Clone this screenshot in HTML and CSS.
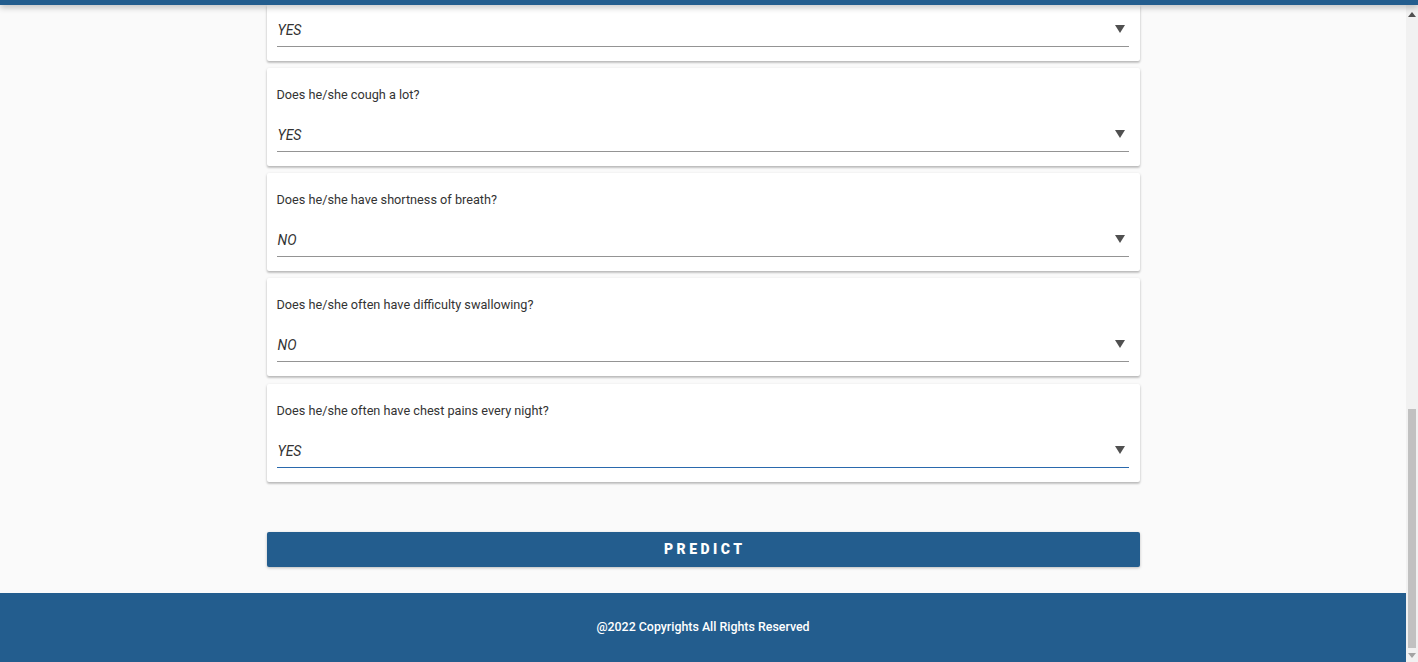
FILE: index.html
```html
<!DOCTYPE html>
<html lang="en">
<head>
<meta charset="utf-8">
<title>Prediction Form</title>
<link rel="stylesheet" href="styles.css">
</head>
<body>
<header class="topbar"></header>
<div class="frame">
  <main class="main">
    <div class="form-list">
      <section class="card card-continued">
        <div class="select"><span class="select-value">YES</span><svg class="caret" width="10" height="8" viewBox="0 0 10 8"><polygon points="0,0 10,0 5,8" fill="#505050"/></svg></div>
      </section>
      <section class="card">
        <label class="q-label">Does he/she cough a lot?</label>
        <div class="select"><span class="select-value">YES</span><svg class="caret" width="10" height="8" viewBox="0 0 10 8"><polygon points="0,0 10,0 5,8" fill="#505050"/></svg></div>
      </section>
      <section class="card">
        <label class="q-label">Does he/she have shortness of breath?</label>
        <div class="select"><span class="select-value">NO</span><svg class="caret" width="10" height="8" viewBox="0 0 10 8"><polygon points="0,0 10,0 5,8" fill="#505050"/></svg></div>
      </section>
      <section class="card">
        <label class="q-label">Does he/she often have difficulty swallowing?</label>
        <div class="select"><span class="select-value">NO</span><svg class="caret" width="10" height="8" viewBox="0 0 10 8"><polygon points="0,0 10,0 5,8" fill="#505050"/></svg></div>
      </section>
      <section class="card card-last">
        <label class="q-label">Does he/she often have chest pains every night?</label>
        <div class="select select-focused"><span class="select-value">YES</span><svg class="caret" width="10" height="8" viewBox="0 0 10 8"><polygon points="0,0 10,0 5,8" fill="#505050"/></svg></div>
      </section>
    </div>
    <button class="predict-btn" type="button">PREDICT</button>
    <footer class="footer">@2022 Copyrights All Rights Reserved</footer>
  </main>
  <div class="scrollbar">
    <div class="sb-arrow sb-up"><svg width="8" height="5" viewBox="0 0 8 5"><polygon points="0,5 8,5 4,0" fill="#505050"/></svg></div>
    <div class="sb-track"><div class="sb-thumb"></div></div>
    <div class="sb-arrow sb-down"><svg width="8" height="5" viewBox="0 0 8 5"><polygon points="0,0 8,0 4,5" fill="#a3a3a3"/></svg></div>
  </div>
</div>
</body>
</html>
```
FILE: styles.css
```css
html, body {
  margin: 0;
  padding: 0;
  height: 662px;
  overflow: hidden;
}
body {
  background: #fafafa;
  font-family: Roboto, "Liberation Sans", Arial, sans-serif;
  color: #333;
  display: flex;
  flex-direction: column;
}
.topbar {
  height: 5px;
  flex: none;
  background: #235d8e;
  box-shadow: 0 2px 6px rgba(0, 0, 0, 0.3);
  position: relative;
  z-index: 2;
}
.frame {
  flex: 1;
  display: flex;
  min-height: 0;
}
.main {
  flex: 1;
  display: flex;
  flex-direction: column;
  align-items: center;
  overflow: hidden;
}
.form-list {
  width: 873px;
  display: flex;
  flex-direction: column;
  gap: 7px;
}
.card {
  background: #fff;
  border-radius: 2px;
  box-shadow: 0 2px 2px rgba(0, 0, 0, 0.14), 0 1px 3px rgba(0, 0, 0, 0.18);
  padding: 19px 11px 14px 10px;
  display: flex;
  flex-direction: column;
}
.card-continued {
  padding-top: 9px;
  border-radius: 0 0 2px 2px;
}
.card-continued .select {
  margin-top: 0;
}
.card-last {
  margin-top: 1px;
}
.q-label {
  font-size: 12.7px;
  line-height: 16px;
  color: #333;
}
.select {
  margin-top: 16px;
  height: 32px;
  border-bottom: 1px solid #949494;
  display: flex;
  align-items: center;
  justify-content: space-between;
  padding: 0 4px 0 1px;
}
.select-focused {
  border-bottom: 1px solid #2a69ad;
}
.select-value {
  font-style: italic;
  font-size: 14px;
  color: #333;
}
.caret {
  margin-top: -2px;
}
.predict-btn {
  width: 873px;
  height: 35px;
  margin-top: 50px;
  flex: none;
  border: none;
  border-radius: 2px;
  background: #235d8e;
  color: #fff;
  font-family: Roboto, "Liberation Sans", Arial, sans-serif;
  font-size: 14px;
  font-weight: 900;
  letter-spacing: 3.5px;
  padding: 0 0 2px 3.5px;
  box-shadow: 0 1px 3px rgba(0, 0, 0, 0.25);
}
.footer {
  align-self: stretch;
  flex: none;
  margin-top: 26px;
  height: 75px;
  box-sizing: border-box;
  padding-top: 25px;
  background: #235d8e;
  color: #fff;
  text-align: center;
  font-size: 12.4px;
  font-weight: 500;
  line-height: 17px;
}
.scrollbar {
  width: 12px;
  flex: none;
  background: #f1f1f1;
  display: flex;
  flex-direction: column;
}
.sb-arrow {
  height: 14px;
  display: flex;
  align-items: center;
  justify-content: center;
  flex: none;
}
.sb-up {
  padding-top: 2px;
}
.sb-track {
  flex: 1;
  display: flex;
  flex-direction: column;
  justify-content: flex-end;
  padding: 0 2px;
}
.sb-thumb {
  height: 239px;
  background: #c1c1c1;
}
.sb-down {
  height: 14px;
}
```
